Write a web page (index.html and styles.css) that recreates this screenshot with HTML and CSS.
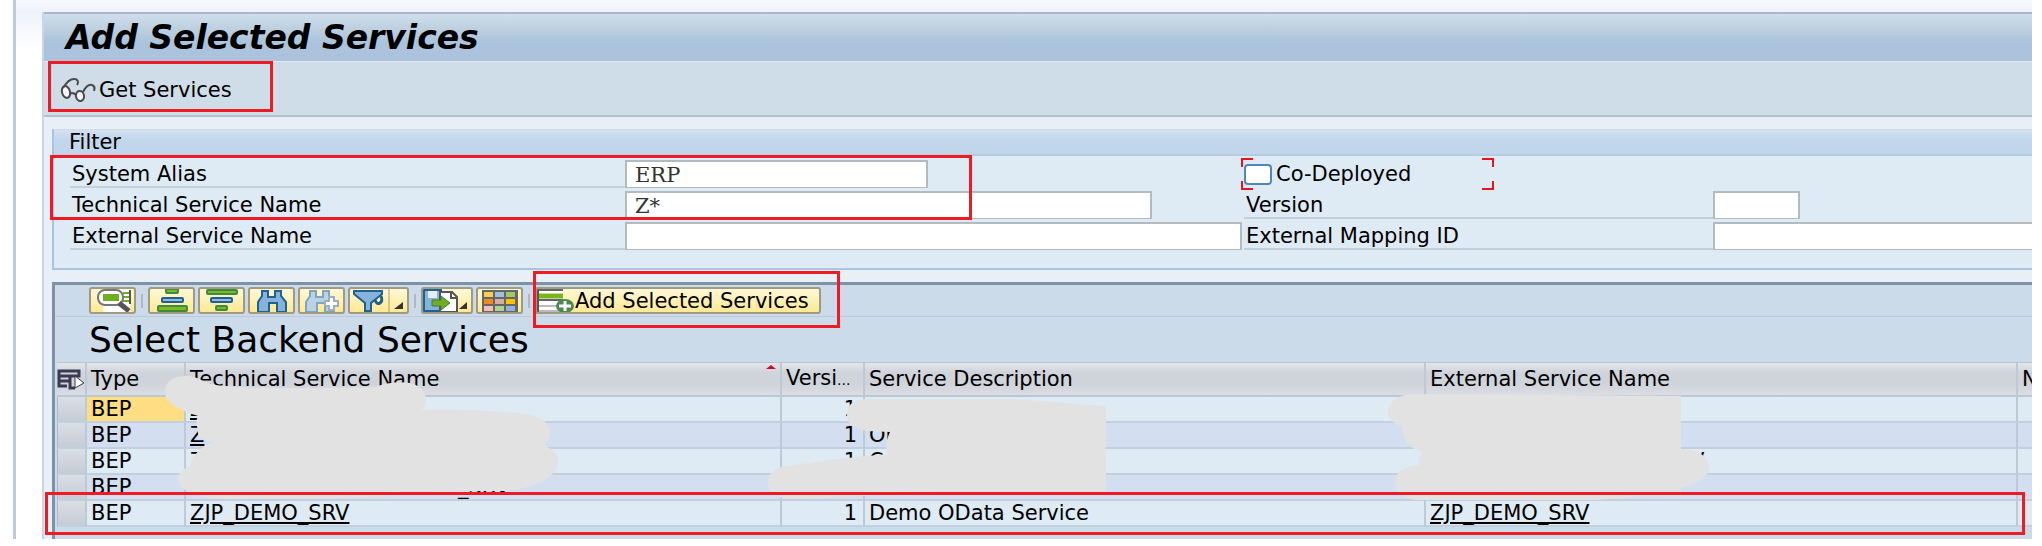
FILE: index.html
```html
<!DOCTYPE html>
<html lang="en">
<head>
<meta charset="utf-8">
<title>Add Selected Services</title>
<link rel="stylesheet" href="styles.css">
</head>
<body>
<div class="window">
<main class="screen">
  <header class="titlebar"><h1>Add Selected Services</h1></header>
  <div class="appbar">
    <button class="get" type="button">
      <svg width="36" height="24" viewBox="0 0 36 24" fill="none" stroke="#4a4a4a" stroke-width="2" aria-hidden="true">
        <ellipse cx="6" cy="14" rx="4" ry="6" transform="rotate(-15 6 14)" fill="#f4f6f8"/><ellipse cx="20" cy="18" rx="4" ry="5" transform="rotate(-10 20 18)" fill="#f4f6f8"/>
        <path d="M10 16c2-2 4-1 6 1M3 10C6 5 10 1 14 1c4 0 5 3 3 6M23 14c2-4 5-8 9-7 3 1 3 3 2 6"/>
      </svg>
      <span>Get Services</span>
    </button>
    <span class="mark mark-get"></span>
  </div>

  <section class="filter">
    <h2>Filter</h2>
    <span class="mark mark-filter"></span>
    <div class="fields">
      <div class="field"><label for="alias">System Alias</label><input id="alias" class="w-alias" value="ERP"></div>
      <div class="check"><input type="checkbox" id="co"><label for="co">Co-Deployed</label><i class="tl"></i><i class="tr"></i><i class="bl"></i><i class="br"></i></div>
      <div class="field"><label for="tech">Technical Service Name</label><input id="tech" class="w-tech" value="Z*"></div>
      <div class="field second"><label for="ver">Version</label><input id="ver" class="w-ver"></div>
      <div class="field"><label for="ext">External Service Name</label><input id="ext" class="w-fill"></div>
      <div class="field second"><label for="map">External Mapping ID</label><input id="map" class="w-fill open"></div>
    </div>
  </section>

  <section class="grid">
    <div class="tools">
      <button class="tool" type="button" aria-label="Details"><svg width="44" height="24" viewBox="0 0 44 24"><path d="M12 1h27v22H12z" fill="#fff"/><path d="M32 4h6M32 8h6M32 12h6" stroke="#6fae1e" stroke-width="2"/><path d="M39 1v14" stroke="#555" stroke-width="2"/><rect x="7" y="1" width="25" height="15" rx="7" fill="#fff" stroke="#777" stroke-width="2"/><rect x="12" y="5" width="16" height="7" fill="#6fae1e"/><path d="M28 14l10 8" stroke="#555" stroke-width="5"/></svg></button>
      <span class="sep"></span>
      <button class="tool" type="button" aria-label="Sort ascending"><svg width="44" height="24" viewBox="0 0 44 24" stroke-width="2"><rect x="16" y="0" width="12" height="4" rx="1" fill="#7fba1c" stroke="#3c8a46"/><rect x="12" y="9" width="21" height="4" rx="1" fill="#8fbbe0" stroke="#235f90"/><rect x="8" y="17" width="29" height="5" rx="1" fill="#7fba1c" stroke="#3c8a46"/></svg></button>
      <button class="tool" type="button" aria-label="Sort descending"><svg width="44" height="24" viewBox="0 0 44 24" stroke-width="2"><rect x="7" y="1" width="30" height="4" rx="1" fill="#7fba1c" stroke="#3c8a46"/><rect x="11" y="9" width="21" height="4" rx="1" fill="#8fbbe0" stroke="#235f90"/><rect x="16" y="17" width="11" height="4" rx="1" fill="#7fba1c" stroke="#3c8a46"/></svg></button>
      <button class="tool" type="button" aria-label="Find"><svg width="44" height="24" viewBox="0 0 44 24"><path d="M12 2h6v6h7V2h6v5l5 6v10h-9v-9h-8v9H8V13l4-6z" fill="#86b3dc" stroke="#1f628f" stroke-width="2"/></svg></button>
      <button class="tool" type="button" aria-label="Find next"><svg width="44" height="24" viewBox="0 0 44 24"><path d="M10 2h6v6h7V2h6v5l5 6v10h-9v-9h-8v9H6V13l4-6z" fill="#bcd2e2" stroke="#7fa6bf" stroke-width="2"/><path d="M29 8h5v4h4v5h-4v4h-5v-4h-4v-5h4z" fill="#fff" stroke="#9aaec6" stroke-width="2"/></svg></button>
      <button class="tool split" type="button" aria-label="Set filter"><svg width="57" height="24" viewBox="0 0 57 24"><path d="M4 2h28v3L21 14v8h-6v-8L4 5z" fill="#86b3dc" stroke="#1f628f" stroke-width="2"/><path d="M25 11q2 5 5 3t1-7" fill="none" stroke="#1f628f" stroke-width="3"/><path d="M39 0v24" stroke="#a79b68"/><path d="M53 13v7H44z" fill="#333"/></svg></button>
      <span class="sep"></span>
      <button class="tool export" type="button" aria-label="Export"><svg width="48" height="24" viewBox="0 0 48 24"><path d="M1 1h17v21H1z" fill="#86b3dc" stroke="#1f628f" stroke-width="2"/><path d="M5 2h9v7H5z" fill="#e3eef7"/><path d="M17 3h12l5 5v15H17z" fill="#fff" stroke="#555" stroke-width="2"/><path d="M28 3v6h6" fill="none" stroke="#555" stroke-width="2"/><path d="M9 11h9V7l9 7-9 7v-4H9z" fill="#6fae1e" stroke="#3c7d3a"/><path d="M44 13v7H36z" fill="#333"/></svg></button>
      <button class="tool" type="button" aria-label="Choose layout"><svg width="44" height="24" viewBox="0 0 44 24"><path d="M4 1h36v22H4z" fill="#666"/><g><path fill="#f9cf52" d="M6 3h9v5H6z"/><path fill="#9cc0e2" d="M17 3h9v5h-9z"/><path fill="#a3c964" d="M28 3h9v5h-9z"/><path fill="#f08c1e" d="M6 10h9v5H6z"/><path fill="#d5aca2" d="M17 10h9v5h-9z"/><path fill="#fdc300" d="M28 10h9v5h-9z"/><path fill="#f6bdbd" d="M6 17h9v5H6z"/><path fill="#a9d391" d="M17 17h9v5h-9z"/><path fill="#8fb4dc" d="M28 17h9v5h-9z"/></g></svg></button>
      <span class="sep"></span>
      <button class="tool add" type="button"><svg width="38" height="24" viewBox="0 0 38 24"><path d="M1 0v23" stroke="#555" stroke-width="3"/><path d="M2 1h24v22H2z" fill="#fff"/><path d="M2 1h24M2 11h24" stroke="#666" stroke-width="2"/><path d="M2 7h24" stroke="#7ab51d" stroke-width="5"/><path d="M2 17h24M2 22h24" stroke="#bbb" stroke-width="2"/><ellipse cx="28" cy="17" rx="9" ry="7" fill="#4b8a4f"/><path d="M28 12v10M22 17h12" stroke="#fff" stroke-width="3"/></svg><span>Add Selected Services</span></button>
      <span class="mark mark-add"></span>
    </div>
    <h2>Select Backend Services</h2>
    <div class="tablewrap">
      <table>
        <colgroup><col class="c-sel"><col class="c-type"><col class="c-tech"><col class="c-ver"><col class="c-desc"><col class="c-ext"><col></colgroup>
        <thead><tr>
          <th class="pick"><svg width="28" height="22" viewBox="0 0 28 22"><path d="M2 3h20v5H2zM2 8v10h8M2 13h10M13 8v12h5" fill="none" stroke="#3c3a52" stroke-width="3"/><path d="M18 8l9 7-9 5z" fill="#fff" stroke="#3c3a52"/></svg></th>
          <th>Type</th><th class="sorted">Technical Service Name</th><th>Versi<small>...</small></th><th>Service Description</th><th>External Service Name</th><th>N</th>
        </tr></thead>
        <tbody>
          <tr><td></td><td class="active">BEP</td><td><a href="#">Z</a></td><td class="num">1</td><td></td><td></td><td></td></tr>
          <tr><td></td><td>BEP</td><td><a href="#">Z</a></td><td class="num">1</td><td>Or</td><td></td><td></td></tr>
          <tr><td></td><td>BEP</td><td><a href="#">Z</a></td><td class="num">1</td><td>C</td><td class="tail-ext">V</td><td></td></tr>
          <tr><td></td><td>BEP</td><td class="tail-tech">_SRV</td><td class="num">1</td><td></td><td></td><td></td></tr>
          <tr><td></td><td>BEP</td><td><a href="#">ZJP_DEMO_SRV</a></td><td class="num">1</td><td>Demo OData Service</td><td><a href="#">ZJP_DEMO_SRV</a></td><td></td></tr>
        </tbody>
      </table>
      <svg class="smudge" width="1560" height="130" viewBox="160 374 1560 130" fill="#e2e2e2" aria-hidden="true">
        <path d="M165 392C165 380 175 376 187 376S205 385 225 386C260 389 340 388 375 387C385 383 400 381 410 383C422 386 426 394 426 400S424 408 421 410C455 409 478 410 500 412C540 412 551 422 550 433C549 440 546 443 545 446C556 450 559 458 558 463C556 480 530 488 505 491H450C420 492 400 497 370 497L240 499C200 500 180 492 178 480C179 470 186 468 190 466C193 455 200 447 213 442C200 440 197 435 198 430C196 424 196 420 198 416C190 413 185 413 183 410C172 406 165 400 165 392Z"/>
        <path d="M847 415C847 403 855 399 868 399H1002C1050 400 1070 404 1106 406V493L860 496L791 499C775 498 767 492 768 482C768 472 777 467 787 466L837 459L888 454C885 448 886 440 890 432L866 431C853 428 847 423 847 415Z"/>
        <path d="M1388 412C1388 402 1398 394 1415 394L1681 396V449C1698 449 1709 457 1709 467S1698 483 1681 488V496L1630 497L1597 500H1415C1400 497 1395 490 1395 482C1395 472 1405 466 1419 465C1418 459 1420 455 1423 452C1408 448 1402 440 1403 427C1392 423 1388 418 1388 412Z"/>
      </svg>
      <span class="mark mark-row"></span>
    </div>
  </section>
</main>
</div>
</body>
</html>
```
FILE: styles.css
```css
* { box-sizing: border-box; }
body { margin: 0; background: #fff; font: 21px/26px "DejaVu Sans", sans-serif; color: #000; }
h1, h2 { margin: 0; font-weight: 400; }
button { font: inherit; color: inherit; }
a { color: inherit; text-decoration-thickness: 2px; text-underline-offset: 2px; }

.window { margin: 0 10px 7px 13px; padding: 12px 0 0 28px; border-left: 3px solid #bfcad9; overflow: hidden;
  background: linear-gradient(#f7f9fd, #eff2f9 12px, transparent 50px), #fff; }
.screen { border-left: 2px solid #ccd6e3; margin-left: -2px; background: #e8eff6; }

.titlebar { height: 50px; padding: 0 22px; border-top: 2px solid #a9b8c8; border-bottom: 1px solid #dfe8f0;
  background: linear-gradient(#cfdeec, #bccfdf 16px, #aac4dc 28px, #adc2dc); }
.titlebar h1 { font: italic bold 33px/48px "DejaVu Sans", sans-serif; }

.appbar { position: relative; height: 55px; padding: 14px 16px 12px; background: #cfdde8; border-bottom: 2px solid #b0c0cf; }
.get { display: flex; align-items: center; gap: 3px; padding: 0; border: 0; background: none; line-height: 28px; }

.mark { position: absolute; z-index: 2; border: 3px solid #ed1c24; pointer-events: none; }
.mark-get { left: 4px; top: -1px; width: 225px; height: 51px; }
.mark-filter { left: -4px; top: 26px; width: 922px; height: 65px; }
.mark-add { left: 478px; top: -14px; width: 307px; height: 57px; }
.mark-row { left: -10px; right: 7px; top: 130px; height: 43px; }

.filter { position: relative; margin: 12px 0 0 8px; border-left: 2px solid #a9c4de; border-bottom: 2px solid #a9c4de; background: #deebf4; }
.filter h2 { height: 27px; padding-left: 15px; font-size: 21px; line-height: 25px; border-top: 1px solid #cfdde8; border-bottom: 2px solid #b5cde3;
  background: linear-gradient(#d3e1ef, #c1d7eb 10px, #c1d6eb); }
.fields { display: grid; grid-template-columns: 1172px 1fr; grid-auto-rows: 28px; gap: 3px 2px; padding: 4px 0 18px 16px; }
.field { display: flex; align-items: stretch; }
.field label { flex: 0 0 555px; padding-left: 2px; line-height: 28px; border-bottom: 2px solid #c6d0d8; }
.second label { flex-basis: 469px; }
.field input { min-width: 0; padding: 0 8px; border: 2px solid #b4bbc0; border-bottom-width: 1px; background: #fff; color: #333;
  font: 21px "DejaVu Serif", serif; outline: 0; }
.w-alias { width: 303px; }
.w-tech { width: 527px; }
.w-ver { width: 87px; }
.field .w-fill { flex: 1; }
.field .open { border-right: 0; }
.check { position: relative; display: flex; align-items: center; gap: 4px; justify-self: start; width: 250px; }
.check input { appearance: none; width: 28px; height: 21px; margin: 0; border: 2px solid #4f86c0; border-radius: 4px; background: #fff; }
.check i { position: absolute; width: 12px; height: 9px; border: 0 solid #e8141c; }
.check .tl { left: -3px; top: -2px; border-width: 2px 0 0 2px; }
.check .tr { right: 0; top: -2px; border-width: 2px 2px 0 0; }
.check .bl { left: -3px; bottom: -2px; border-width: 0 0 2px 2px; }
.check .br { right: 0; bottom: -2px; border-width: 0 2px 2px 0; }

.grid { margin: 12px 0 0 8px; border-left: 3px solid #7d92a5; border-top: 3px solid #7d92a5; background: #cbdbe9; }
.tools { position: relative; display: flex; align-items: center; gap: 3px; height: 32px; padding-left: 34px; border-bottom: 1px solid #bccbdb; }
.tool { flex: none; display: flex; align-items: center; justify-content: center; width: 47px; height: 27px; padding: 0; overflow: hidden;
  border: 2px solid #a09a80; border-radius: 3px; background: linear-gradient(#fff8d8, #ffe993); }
.split { width: 61px; }
.export { width: 52px; }
.add { width: 286px; justify-content: flex-start; }
.tool svg { flex: none; }
.sep { width: 2px; height: 14px; margin: 0 2px; background: #adb8c4; }
.grid h2 { padding-left: 34px; font-size: 36px; line-height: 45px; }

.tablewrap { position: relative; padding: 0 0 12px 2px; }
table { width: 100%; table-layout: fixed; border-collapse: separate; border-spacing: 0; border-top: 1px solid #b9c5d2; }
.c-sel { width: 30px; } .c-type { width: 99px; } .c-tech { width: 596px; } .c-ver { width: 83px; } .c-desc { width: 561px; } .c-ext { width: 592px; }
th, td { padding: 0 0 0 4px; text-align: left; font-weight: 400; white-space: nowrap; overflow: hidden; border-right: 2px solid #bcc9d6; }
th { position: relative; height: 32px; line-height: 30px; background: linear-gradient(#e3e6ea, #cfd3da 10px, #cfd3da 20px, #dadde2); border-bottom: 2px solid #b9c8d6; }
td { height: 26px; line-height: 24px; background: #deebf5; border-bottom: 2px solid #c2d0de; }
tr:nth-child(even) td { background: #d3dff0; }
tbody tr td:first-child { background: linear-gradient(#dadfe6, #c6ccd5); border-left: 1px solid #aeb9c5; }
tbody td.active { background: #ffdd82; }
th:last-child, td:last-child { border-right: 0; }
th.pick { padding: 0; }
.pick svg { display: block; }
td.num { padding-right: 6px; text-align: right; }
small { font-size: 14px; }
.sorted::after { content: ""; position: absolute; right: 4px; top: 2px; border: 5px solid transparent; border-top: 0; border-bottom: 4px solid #c8102e; }
td.tail-tech { padding-left: 272px; }
td.tail-ext { padding-left: 264px; }
.smudge { position: absolute; left: 105px; top: 12px; }
```
